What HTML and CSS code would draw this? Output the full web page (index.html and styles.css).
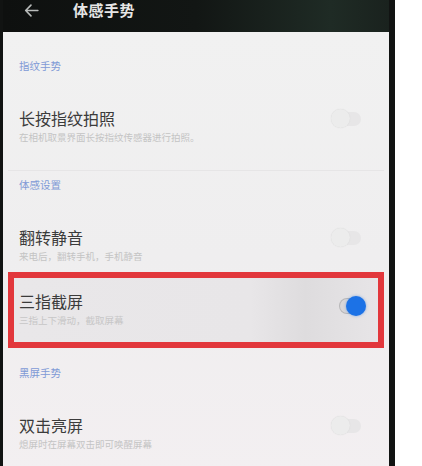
FILE: index.html
```html
<!DOCTYPE html>
<html>
  <head>
    <title>体感手势</title>
    <link rel="stylesheet" href="styles.css">
  </head>
  <body>
    <div class="phone">
      <div class="topbar">
        <svg class="back" viewBox="0 0 16 16" xmlns="http://www.w3.org/2000/svg">
          <path d="M14 8H2.5M7.5 3L2.5 8l5 5" />
        </svg>
        <span class="title">体感手势</span>
      </div>

      <div class="screen">
        <div class="group-label">指纹手势</div>
        <div class="item">
          <div class="item-text">
            <div class="item-title">长按指纹拍照</div>
            <div class="item-desc">在相机取景界面长按指纹传感器进行拍照。</div>
          </div>
          <span class="switch"></span>
        </div>

        <div class="group-label">体感设置</div>
        <div class="item short">
          <div class="item-text">
            <div class="item-title">翻转静音</div>
            <div class="item-desc">来电后，翻转手机，手机静音</div>
          </div>
          <span class="switch"></span>
        </div>
        <div class="item marked">
          <div class="item-text">
            <div class="item-title">三指截屏</div>
            <div class="item-desc">三指上下滑动，截取屏幕</div>
          </div>
          <span class="switch on"></span>
        </div>

        <div class="group-label spaced">黑屏手势</div>
        <div class="item">
          <div class="item-text">
            <div class="item-title">双击亮屏</div>
            <div class="item-desc">熄屏时在屏幕双击即可唤醒屏幕</div>
          </div>
          <span class="switch"></span>
        </div>
      </div>
    </div>
  </body>
</html>
```

FILE: styles.css
```css
body {
  margin: 0;
  background-color: #ffffff;
  font-family: "Noto Sans CJK SC", "Noto Sans", sans-serif;
  height: 466px;
  overflow: hidden;
}
.phone {
  width: 386px;
  height: 466px;
  padding-left: 3px;
  padding-right: 6px;
  background-color: #111312;
  display: flex;
  flex-direction: column;
  overflow: hidden;
}
.topbar {
  flex-shrink: 0;
  height: 32px;
  display: flex;
  align-items: flex-start;
  padding-left: 20px;
  background: linear-gradient(90deg, #0e100f 0%, #121614 50%, #1f2b25 85%, #1a221e 100%);
}
.back {
  width: 17px;
  height: 17px;
  margin-top: 2px;
  fill: none;
  stroke: #b9bcbb;
  stroke-width: 1.5;
  stroke-linecap: round;
  stroke-linejoin: round;
}
.title {
  margin-left: 33px;
  margin-top: -1px;
  color: #e6e6e6;
  font-size: 15px;
  font-weight: 700;
  letter-spacing: 0.5px;
}
.screen {
  flex: 1 0 auto;
  background: linear-gradient(180deg, #f1f1f1 0%, #efeeef 50%, #f3eff1 100%);
  padding: 20px 5px 0;
}
.group-label {
  padding: 6px 11px 0;
  height: 16px;
  color: #7f9ad6;
  font-size: 10.5px;
  line-height: 16px;
}
.group-label.spaced {
  margin-top: 11px;
}
.item {
  display: flex;
  align-items: flex-start;
  height: 62px;
  padding: 34px 23px 0 11px;
  border-bottom: 1px solid #e6e5e6;
}
.item.short {
  height: 45px;
  border-bottom: none;
}
.item-text {
  flex: 1;
}
.item-title {
  color: #3b3b3b;
  font-size: 16px;
  line-height: 20px;
}
.item-desc {
  margin-top: 3px;
  color: #c4c4c4;
  font-size: 9.5px;
  line-height: 12px;
}
.marked {
  height: 51px;
  border: 6px solid #e2373c;
  background: linear-gradient(90deg, #e9e7e9 0%, #e8e6e8 65%, #dedcde 80%, #e7e5e7 100%);
  padding: 13px 18px 0 5px;
}
.marked .item-desc {
  color: #c7c6c7;
}
.switch {
  position: relative;
  width: 28px;
  height: 14px;
  margin-top: 4px;
  border-radius: 7px;
  background-color: #e7e6e7;
}
.switch::after {
  content: "";
  position: absolute;
  left: -2px;
  top: -3px;
  width: 19px;
  height: 19px;
  border-radius: 50%;
  background-color: #ececec;
  box-shadow: 0 0 1px #d0d0d0;
}
.switch.on {
  width: 20px;
  margin-top: 8px;
  background-color: #d8d6d8;
  box-shadow: 0 0 0 1px #b7b6b8;
}
.switch.on::after {
  left: 6px;
  top: -3px;
  width: 20px;
  height: 20px;
  background-color: #1c72e6;
  box-shadow: 0 0 3px rgba(28, 114, 230, 0.5);
}
```
